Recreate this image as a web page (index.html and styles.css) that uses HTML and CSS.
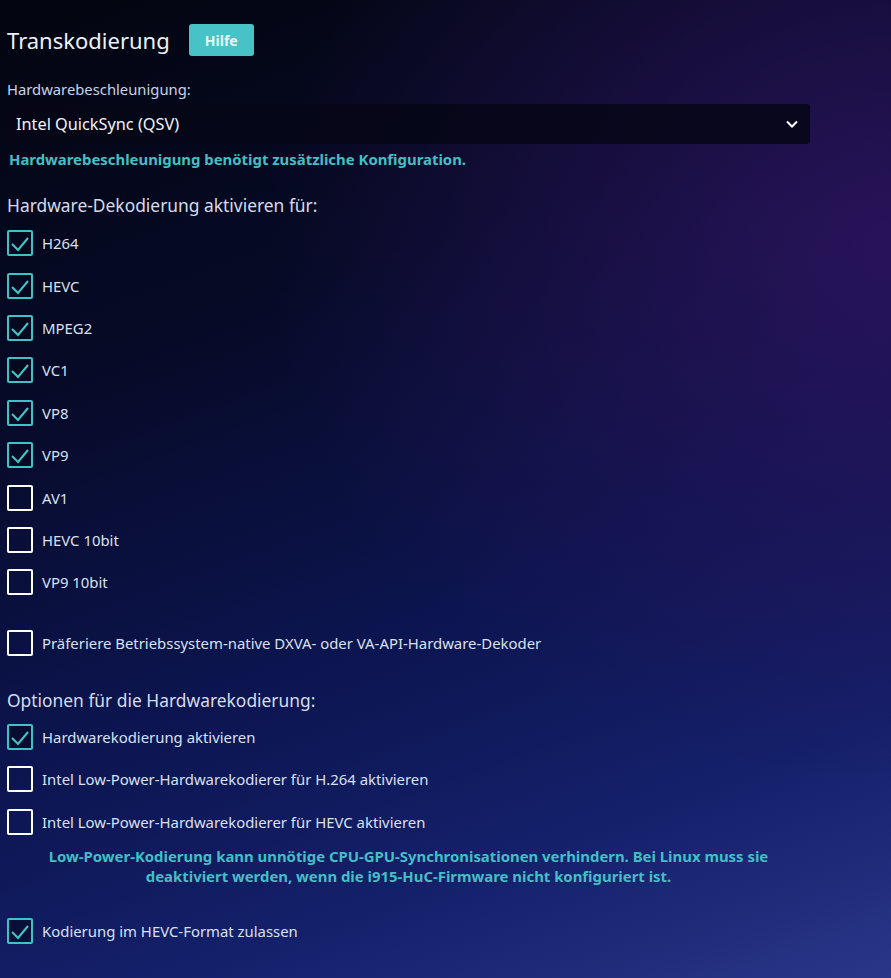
FILE: index.html
```html
<!DOCTYPE html>
<html lang="de">
<head>
<meta charset="utf-8">
<link rel="stylesheet" href="styles.css">
</head>
<body>
<div class="page">
  <div class="title-row">
    <h2 class="title">Transkodierung</h2>
    <button class="help">Hilfe</button>
  </div>

  <label class="field-label">Hardwarebeschleunigung:</label>
  <div class="select">
    <span>Intel QuickSync (QSV)</span>
    <svg class="chev" width="14" height="10" viewBox="0 0 14 10"><path d="M2 2.5 L7 7.5 L12 2.5" fill="none" stroke="#fff" stroke-width="2"/></svg>
  </div>
  <div class="note">Hardwarebeschleunigung benötigt zusätzliche Konfiguration.</div>

  <h3 class="section">Hardware-Dekodierung aktivieren für:</h3>
  <div class="checks">
    <div class="check on"><span class="box"><svg viewBox="0 0 26 26"><path d="M5 14 L11 20 L21 8"/></svg></span><span class="lbl">H264</span></div>
    <div class="check on"><span class="box"><svg viewBox="0 0 26 26"><path d="M5 14 L11 20 L21 8"/></svg></span><span class="lbl">HEVC</span></div>
    <div class="check on"><span class="box"><svg viewBox="0 0 26 26"><path d="M5 14 L11 20 L21 8"/></svg></span><span class="lbl">MPEG2</span></div>
    <div class="check on"><span class="box"><svg viewBox="0 0 26 26"><path d="M5 14 L11 20 L21 8"/></svg></span><span class="lbl">VC1</span></div>
    <div class="check on"><span class="box"><svg viewBox="0 0 26 26"><path d="M5 14 L11 20 L21 8"/></svg></span><span class="lbl">VP8</span></div>
    <div class="check on"><span class="box"><svg viewBox="0 0 26 26"><path d="M5 14 L11 20 L21 8"/></svg></span><span class="lbl">VP9</span></div>
    <div class="check"><span class="box"></span><span class="lbl">AV1</span></div>
    <div class="check"><span class="box"></span><span class="lbl">HEVC 10bit</span></div>
    <div class="check"><span class="box"></span><span class="lbl">VP9 10bit</span></div>
  </div>

  <div class="checks gap-top">
    <div class="check"><span class="box"></span><span class="lbl">Präferiere Betriebssystem-native DXVA- oder VA-API-Hardware-Dekoder</span></div>
  </div>

  <h3 class="section second">Optionen für die Hardwarekodierung:</h3>
  <div class="checks">
    <div class="check on"><span class="box"><svg viewBox="0 0 26 26"><path d="M5 14 L11 20 L21 8"/></svg></span><span class="lbl">Hardwarekodierung aktivieren</span></div>
    <div class="check"><span class="box"></span><span class="lbl">Intel Low-Power-Hardwarekodierer für H.264 aktivieren</span></div>
    <div class="check"><span class="box"></span><span class="lbl">Intel Low-Power-Hardwarekodierer für HEVC aktivieren</span></div>
  </div>
  <div class="note center">Low-Power-Kodierung kann unnötige CPU-GPU-Synchronisationen verhindern. Bei Linux muss sie deaktiviert werden, wenn die i915-HuC-Firmware nicht konfiguriert ist.</div>

  <div class="checks last">
    <div class="check on"><span class="box"><svg viewBox="0 0 26 26"><path d="M5 14 L11 20 L21 8"/></svg></span><span class="lbl">Kodierung im HEVC-Format zulassen</span></div>
  </div>
</div>
</body>
</html>
```

FILE: styles.css
```css
html, body {
  margin: 0;
  height: 100%;
}
body {
  font-family: "Noto Sans", "Open Sans", sans-serif;
  color: #e6ebf7;
  background-color: #0b1240;
  background-image:
    radial-gradient(ellipse 70% 55% at 100% 25%, rgba(45, 20, 95, 0.85), rgba(45, 20, 95, 0) 100%),
    linear-gradient(160deg, #03050f 0%, #060a26 30%, #0c1550 60%, #14206a 80%, #2a3688 100%);
  overflow: hidden;
}
.page {
  width: 803px;
  padding: 24px 0 0 7px;
  display: flex;
  flex-direction: column;
}
.title-row {
  display: flex;
  align-items: center;
  gap: 19px;
  height: 32px;
}
.title {
  margin: 0;
  font-size: 22px;
  font-weight: 400;
  color: #eef1f8;
}
.help {
  background: #47c2c7;
  color: #e9f6f8;
  border: none;
  border-radius: 3px;
  font-family: inherit;
  font-weight: 700;
  font-size: 14px;
  width: 65px;
  height: 32px;
  padding: 0;
}
.field-label {
  margin-top: 24px;
  font-size: 14.8px;
  color: #c7d3ea;
  line-height: 18px;
}
.select {
  margin-top: 6px;
  height: 40px;
  border-radius: 3px;
  background: rgba(6, 6, 22, 0.85);
  display: flex;
  align-items: center;
  justify-content: space-between;
  padding: 0 10px 0 9px;
  font-size: 16.3px;
  color: #f2f4fa;
}
.chev {
  margin-right: 1px;
}
.note {
  margin-top: 5px;
  padding-left: 2px;
  font-size: 14.9px;
  font-weight: 700;
  color: #43bfc5;
  line-height: 20px;
}
.note.center {
  text-align: center;
  padding: 0 30px;
  margin-top: 3px;
}
.section {
  margin: 24px 0 5px;
  font-size: 17.4px;
  font-weight: 400;
  color: #d4dcef;
  line-height: 24px;
}
.section.second {
  margin: 24px 0 4px;
}
.checks {
  display: flex;
  flex-direction: column;
}
.checks.gap-top {
  margin-top: 18px;
}
.checks.last {
  margin-top: 24px;
}
.check {
  display: flex;
  align-items: center;
  height: 42.4px;
  gap: 9px;
}
.box {
  width: 26px;
  height: 26px;
  box-sizing: border-box;
  border: 2px solid #ffffff;
  border-radius: 2px;
  flex: none;
  position: relative;
}
.check.on .box {
  border-color: #3ec2c8;
  background: rgba(5, 8, 30, 0.6);
}
.box svg {
  position: absolute;
  left: -2px;
  top: -2px;
  width: 26px;
  height: 26px;
}
.box path {
  fill: none;
  stroke: #3ec7c9;
  stroke-width: 2;
}
.lbl {
  font-size: 14.9px;
  color: #d8e0f2;
}
```
